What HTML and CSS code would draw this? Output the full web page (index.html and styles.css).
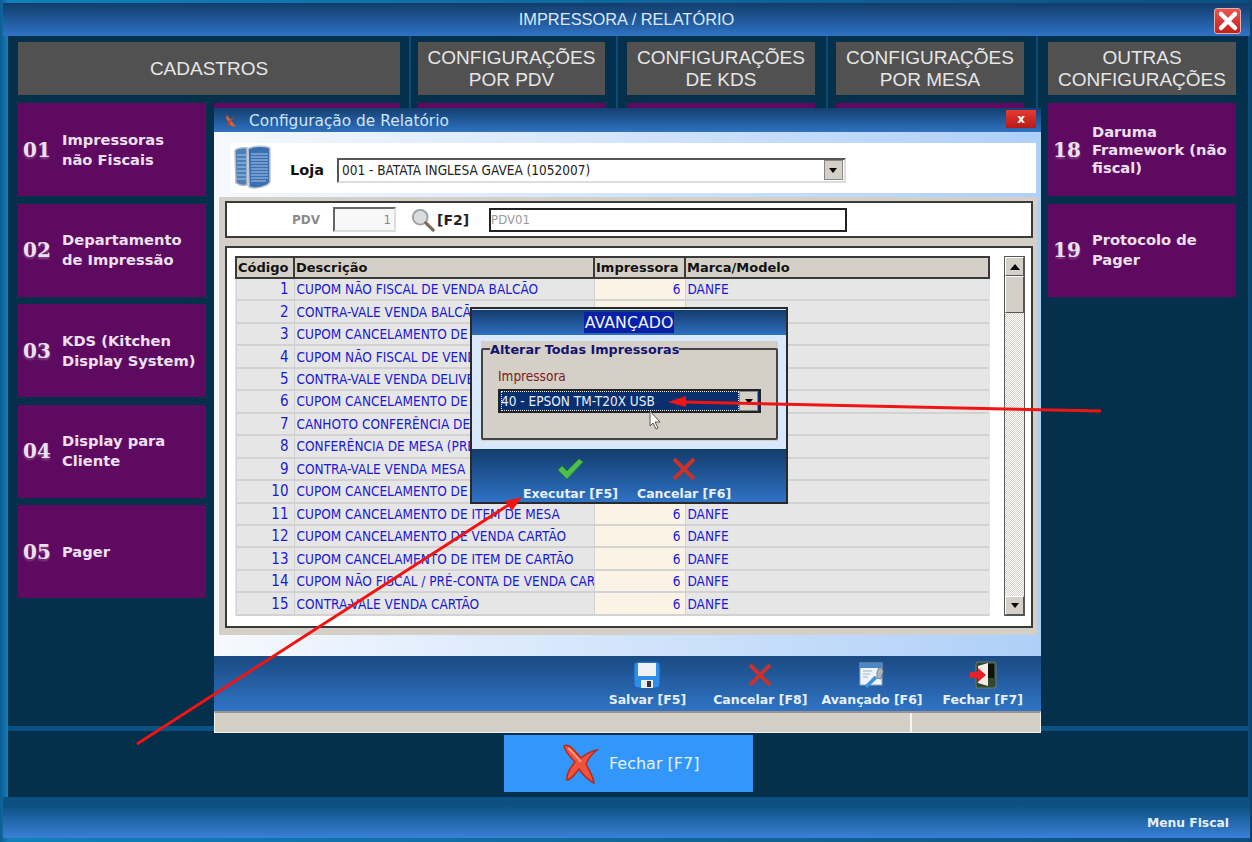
FILE: index.html
```html
<!DOCTYPE html>
<html lang="pt-BR">
<head>
    <meta charset="UTF-8">
    <meta name="viewport" content="width=device-width, initial-scale=1.0">
    <title>Impressora / Relatório</title>
    <link rel="stylesheet" href="styles.css">
</head>
<body>
    <div class="app">
        <!-- Title bar -->
        <header class="titlebar">
            <span>IMPRESSORA / RELATÓRIO</span>
            <button class="app-close">
                <svg width="22" height="22" viewBox="0 0 22 22"><path d="M4 4 L18 18 M18 4 L4 18" stroke="#fff" stroke-width="4.5" stroke-linecap="round"/></svg>
            </button>
        </header>

        <!-- Menu columns -->
        <main class="menu">
            <section class="group group-cadastros">
                <h2 class="group-title">CADASTROS</h2>
                <div class="cards-two">
                    <div class="cards">
                        <a class="card"><b>01</b><span>Impressoras<br>não Fiscais</span></a>
                        <a class="card"><b>02</b><span>Departamento<br>de Impressão</span></a>
                        <a class="card"><b>03</b><span>KDS (Kitchen<br>Display System)</span></a>
                        <a class="card"><b>04</b><span>Display para<br>Cliente</span></a>
                        <a class="card"><b>05</b><span>Pager</span></a>
                    </div>
                    <div class="cards">
                        <a class="card"></a>
                    </div>
                </div>
            </section>
            <section class="group group-pdv">
                <h2 class="group-title">CONFIGURAÇÕES<br>POR PDV</h2>
                <div class="cards"><a class="card"></a></div>
            </section>
            <section class="group group-kds">
                <h2 class="group-title">CONFIGURAÇÕES<br>DE KDS</h2>
                <div class="cards"><a class="card"></a></div>
            </section>
            <section class="group group-mesa">
                <h2 class="group-title">CONFIGURAÇÕES<br>POR MESA</h2>
                <div class="cards"><a class="card"></a></div>
            </section>
            <section class="group group-last">
                <h2 class="group-title">OUTRAS<br>CONFIGURAÇÕES</h2>
                <div class="cards">
                    <a class="card"><b>18</b><span class="tight">Daruma<br>Framework (não<br>fiscal)</span></a>
                    <a class="card"><b>19</b><span>Protocolo de<br>Pager</span></a>
                </div>
            </section>
        </main>

        <!-- Close bar -->
        <div class="closebar">
            <button class="big-close">
                <svg width="38" height="42" viewBox="0 0 38 42">
                    <path d="M3 3 C7 0 11 5 20 15 C25 11 30 8 36 7 C31 11 27 16 25 21 C28 27 32 33 33 40 C27 37 22 32 18 26 C14 31 10 37 6 37 C5 31 9 25 14 19 C9 14 4 9 3 3 Z" fill="#f0523a" stroke="#b52a20" stroke-width="1.5"/>
                    <path d="M7 5 C11 8 15 13 20 19" stroke="#ff9a80" stroke-width="2" fill="none"/>
                </svg>
                <span>Fechar [F7]</span>
            </button>
        </div>

        <footer class="statusbar">Menu Fiscal</footer>
    </div>

    <!-- Configuration window -->
    <div class="dialog">
        <div class="dialog-title">
            <svg width="14" height="14" viewBox="0 0 14 14"><path d="M3 1 L12 13 L7 12 L2 4 Z" fill="#e0602a"/><path d="M10 2 L7 8 L2 13 L5 7 Z" fill="#c8402a"/></svg>
            <span>Configuração de Relatório</span>
            <button class="dialog-close">x</button>
        </div>

        <div class="dialog-body">
            <div class="loja-panel">
                <svg class="servers" width="40" height="46" viewBox="0 0 40 46">
                    <path d="M2 6 C2 4 8 2 14 3 L14 40 C10 41 6 40 3 38 Z" fill="#4f7fb8" stroke="#b5bcc4" stroke-width="1.5"/>
                    <path d="M15 4 C18 1 32 0 37 3 L37 37 C36 41 22 45 16 42 Z" fill="#3a6fb2" stroke="#c2c8d0" stroke-width="1.5"/>
                    <path d="M18 9 H35 M18 12 H35 M18 15 H35 M18 18 H35 M18 21 H35 M18 24 H35 M18 27 H35 M18 30 H35 M18 33 H35 M18 36 H33 M4 10 H13 M4 14 H13 M4 18 H13 M4 22 H13 M4 26 H13 M4 30 H13 M4 34 H13" stroke="#a9c6e8" stroke-width="1"/>
                </svg>
                <label class="loja-label">Loja</label>
                <div class="select loja-select">
                    <span>001 - BATATA INGLESA GAVEA (1052007)</span>
                    <i class="select-btn"><em class="tri-down"></em></i>
                </div>
            </div>

            <div class="gray-area">
                <div class="pdv-panel">
                    <span class="pdv-label">PDV</span>
                    <span class="pdv-num">1</span>
                    <svg width="24" height="24" viewBox="0 0 26 26">
                        <circle cx="10" cy="10" r="8" fill="#d9dde0" stroke="#9a9fa3" stroke-width="2"/>
                        <path d="M16 16 L24 24" stroke="#7d6a55" stroke-width="3.5" stroke-linecap="round"/>
                    </svg>
                    <b class="f2">[F2]</b>
                    <span class="pdv-name">PDV01</span>
                </div>

                <div class="grid-panel">
                    <div class="grid-wrap">
                        <table class="grid">
                            <thead>
                                <tr><th class="col-code">Código</th><th class="col-desc">Descrição</th><th class="col-imp">Impressora</th><th class="col-brand">Marca/Modelo</th></tr>
                            </thead>
                            <tbody>
                                <tr><td class="code">1</td><td><div class="clip">CUPOM NÃO FISCAL DE VENDA BALCÃO</div></td><td class="imp">6</td><td>DANFE</td></tr>
                                <tr><td class="code">2</td><td><div class="clip">CONTRA-VALE VENDA BALCÃO</div></td><td class="imp"></td><td></td></tr>
                                <tr><td class="code">3</td><td><div class="clip">CUPOM CANCELAMENTO DE VENDA</div></td><td class="imp"></td><td></td></tr>
                                <tr><td class="code">4</td><td><div class="clip">CUPOM NÃO FISCAL DE VENDA</div></td><td class="imp"></td><td></td></tr>
                                <tr><td class="code">5</td><td><div class="clip">CONTRA-VALE VENDA DELIVERY</div></td><td class="imp"></td><td></td></tr>
                                <tr><td class="code">6</td><td><div class="clip">CUPOM CANCELAMENTO DE VENDA</div></td><td class="imp"></td><td></td></tr>
                                <tr><td class="code">7</td><td><div class="clip">CANHOTO CONFERÊNCIA DE MESA</div></td><td class="imp"></td><td></td></tr>
                                <tr><td class="code">8</td><td><div class="clip">CONFERÊNCIA DE MESA (PRÉ-CONTA)</div></td><td class="imp"></td><td></td></tr>
                                <tr><td class="code">9</td><td><div class="clip">CONTRA-VALE VENDA MESA</div></td><td class="imp"></td><td></td></tr>
                                <tr><td class="code">10</td><td><div class="clip">CUPOM CANCELAMENTO DE VENDA</div></td><td class="imp"></td><td></td></tr>
                                <tr><td class="code">11</td><td><div class="clip">CUPOM CANCELAMENTO DE ITEM DE MESA</div></td><td class="imp">6</td><td>DANFE</td></tr>
                                <tr><td class="code">12</td><td><div class="clip">CUPOM CANCELAMENTO DE VENDA CARTÃO</div></td><td class="imp">6</td><td>DANFE</td></tr>
                                <tr><td class="code">13</td><td><div class="clip">CUPOM CANCELAMENTO DE ITEM DE CARTÃO</div></td><td class="imp">6</td><td>DANFE</td></tr>
                                <tr><td class="code">14</td><td><div class="clip">CUPOM NÃO FISCAL / PRÉ-CONTA DE VENDA CAR</div></td><td class="imp">6</td><td>DANFE</td></tr>
                                <tr><td class="code">15</td><td><div class="clip">CONTRA-VALE VENDA CARTÃO</div></td><td class="imp">6</td><td>DANFE</td></tr>
                            </tbody>
                        </table>
                        <div class="scrollbar">
                            <i class="scroll-btn"><em class="tri-up"></em></i>
                            <i class="scroll-thumb"></i>
                            <i class="scroll-track"></i>
                            <i class="scroll-btn"><em class="tri-down"></em></i>
                        </div>
                    </div>
                </div>
            </div>
        </div>

        <div class="dialog-toolbar">
            <button class="tool tool-save">
                <svg width="28" height="28" viewBox="0 0 28 28">
                    <rect x="1" y="1" width="26" height="26" rx="4" fill="#2f8de8" stroke="#1b5fae"/>
                    <rect x="5" y="2" width="18" height="13" fill="#eef0f2"/>
                    <rect x="8" y="19" width="12" height="8" fill="#e8eaec"/>
                    <rect x="14" y="20" width="4" height="6" fill="#333"/>
                </svg>
                <span>Salvar [F5]</span>
            </button>
            <button class="tool tool-cancel">
                <svg width="28" height="28" viewBox="0 0 28 28"><path d="M4 4 L24 24 M24 4 L4 24" stroke="#c8322c" stroke-width="4"/></svg>
                <span>Cancelar [F8]</span>
            </button>
            <button class="tool tool-adv">
                <svg width="28" height="28" viewBox="0 0 28 28">
                    <rect x="2" y="2" width="22" height="22" fill="#eef3fa" stroke="#8fa8c4"/>
                    <rect x="2" y="2" width="22" height="5" fill="#4f86c6"/>
                    <path d="M5 10 H14 M5 13 H12 M5 16 H10" stroke="#9cb2cc"/>
                    <path d="M21 7 C25 7 26 11 24 13 L23 18 L19 17 L19 11 Z" fill="#aab4bb" stroke="#7c8790"/>
                    <path d="M8 26 L18 16" stroke="#3b8fdc" stroke-width="3.5"/>
                </svg>
                <span>Avançado [F6]</span>
            </button>
            <button class="tool">
                <svg width="28" height="28" viewBox="0 0 28 28">
                    <rect x="7" y="1" width="20" height="26" rx="2" fill="#2f4a2c" stroke="#777"/>
                    <rect x="19" y="3" width="6" height="14" fill="#111"/>
                    <path d="M9 5 L19 2 L19 25 L9 22 Z" fill="#f0eee6"/>
                    <path d="M1 11 H9 V7 L17 14 L9 21 V17 H1 Z" fill="#e8202a"/>
                </svg>
                <span>Fechar [F7]</span>
            </button>
        </div>

        <div class="dialog-status"><i></i><i class="status-end"></i></div>
    </div>

    <!-- Advanced modal -->
    <div class="modal">
        <div class="modal-title"><span>AVANÇADO</span></div>
        <div class="modal-body">
            <div class="modal-gray">
                <fieldset class="modal-group">
                    <legend>Alterar Todas Impressoras</legend>
                    <label>Impressora</label>
                    <div class="select modal-select">
                        <span>40 - EPSON TM-T20X USB</span>
                        <i class="select-btn"><em class="tri-down"></em></i>
                    </div>
                </fieldset>
            </div>
        </div>
        <div class="modal-toolbar">
            <button class="tool">
                <svg width="28" height="24" viewBox="0 0 28 24"><path d="M2 13 L6 9 L11 14 L23 2 L27 5 L11 22 Z" fill="#4cc04a" stroke="#2f8a35"/></svg>
                <span>Executar [F5]</span>
            </button>
            <button class="tool">
                <svg width="28" height="24" viewBox="0 0 28 24"><path d="M4 2 L24 22 M24 2 L4 22" stroke="#c8322c" stroke-width="4"/></svg>
                <span>Cancelar [F6]</span>
            </button>
        </div>
    </div>

    <!-- Annotations drawn over the screenshot -->
    <svg class="annotations" width="1252" height="842" viewBox="0 0 1252 842">
        <path d="M1101 411 L682 402" stroke="#f01414" stroke-width="3"/>
        <path d="M668 402 L686 396 L686 407 Z" fill="#f01414"/>
        <path d="M137 744 L510 504" stroke="#f01414" stroke-width="3"/>
        <path d="M522 497 L512 511 L505 501 Z" fill="#f01414"/>
        <path d="M650 411 V426 L653 423 L656 429 L658 428 L655 422 L660 422 Z" fill="#fff" stroke="#555" stroke-width="1"/>
    </svg>
</body>
</html>
```

FILE: styles.css
```css
* {
    box-sizing: border-box;
}
html, body {
    margin: 0;
    padding: 0;
}
body {
    width: 1252px;
    height: 842px;
    overflow: hidden;
    position: relative;
    font-family: "Liberation Sans", Arial, sans-serif;
    background: linear-gradient(90deg, #0d5c92 0, #1180b8 8px, #0d4f82 1248px, #0d3f68 100%);
}
button {
    font-family: inherit;
    border: none;
    background: none;
    padding: 0;
}
.app {
    height: 842px;
    padding-top: 3px;
    display: flex;
    flex-direction: column;
}
/* Title bar */
.titlebar {
    height: 33px;
    margin: 0 2px 0 3px;
    flex: none;
    display: flex;
    align-items: center;
    justify-content: center;
    position: relative;
    color: #dce8f5;
    font-size: 16.4px;
    background: linear-gradient(#113d6b, #2f72c4);
}
.app-close {
    position: absolute;
    top: 5px;
    right: 9px;
    width: 27px;
    height: 26px;
    border-radius: 3px;
    background: linear-gradient(#e8554f, #c31f1c);
    border: 1px solid #e6b0ac;
    display: flex;
    align-items: center;
    justify-content: center;
}
/* Menu */
.menu {
    flex: 1;
    min-height: 0;
    margin: 0 4px 0 8px;
    display: flex;
    background: #04304b;
    border-bottom: 5px solid #0b5284;
}
.group {
    padding-top: 6px;
    border-right: 2px solid #0c4a78;
}
.group-cadastros {
    width: 403px;
    padding-left: 10px;
    padding-right: 9px;
}
.group-pdv {
    width: 207px;
    padding-left: 7px;
    padding-right: 11px;
}
.group-kds {
    width: 210px;
    padding-left: 9px;
    padding-right: 11px;
}
.group-mesa {
    width: 210px;
    padding-left: 8px;
    padding-right: 12px;
}
.group-last {
    width: 210px;
    padding-left: 10px;
    padding-right: 12px;
    border-right: none;
}
.group-title {
    margin: 0;
    height: 53px;
    display: flex;
    align-items: center;
    justify-content: center;
    text-align: center;
    background: #515151;
    color: #e6e6e6;
    font-size: 19px;
    line-height: 22px;
    font-weight: normal;
}
.cards-two {
    display: flex;
    gap: 8px;
}
.cards-two .cards {
    width: 188px;
}
.cards-two .cards + .cards {
    width: 186px;
}
.cards {
    margin-top: 8px;
    display: flex;
    flex-direction: column;
    gap: 7.5px;
}
.card {
    height: 93px;
    display: flex;
    align-items: center;
    gap: 13px;
    padding-left: 5px;
    background: #5e0a60;
    color: #ece0ee;
    font-family: "DejaVu Sans", Verdana, sans-serif;
    font-size: 14.7px;
    font-weight: bold;
    line-height: 20px;
}
.card b {
    width: 26px;
    font-family: "DejaVu Serif", Georgia, serif;
    font-size: 20px;
    text-shadow: 0 2px 2px rgba(255, 255, 255, 0.25);
}
.card .tight {
    line-height: 18px;
}
/* Close bar */
.closebar {
    height: 66px;
    flex: none;
    margin: 0 4px 0 8px;
    padding-top: 4px;
    padding-left: 496px;
    background: #04304b;
}
.big-close {
    width: 249px;
    height: 57px;
    background: #3296fa;
    color: #e6f2ff;
    font-family: "DejaVu Sans", Verdana, sans-serif;
    font-size: 16px;
    display: flex;
    align-items: center;
    gap: 10px;
    padding-left: 57px;
}
.statusbar {
    height: 41px;
    flex: none;
    margin: 0 2px 4px 3px;
    background: linear-gradient(#0c5080 20%, #3a80d8);
    color: #e6eef8;
    font-family: "DejaVu Sans", Verdana, sans-serif;
    font-size: 12.3px;
    font-weight: bold;
    display: flex;
    align-items: center;
    justify-content: flex-end;
    padding: 10px 21px 0 0;
}
/* Configuration window */
.dialog {
    position: absolute;
    left: 214px;
    top: 108px;
    width: 827px;
    height: 625px;
    display: flex;
    flex-direction: column;
}
.dialog-title {
    height: 24px;
    flex: none;
    display: flex;
    align-items: center;
    gap: 11px;
    padding: 2px 0 0 10px;
    position: relative;
    color: #cfe4fb;
    font-family: "DejaVu Sans", Verdana, sans-serif;
    font-size: 15.4px;
    background: linear-gradient(#143f70, #2f72c0);
}
.dialog-close {
    position: absolute;
    right: 5px;
    top: 2px;
    width: 30px;
    height: 18px;
    background: linear-gradient(#e53a34, #b81a18);
    color: #fff;
    font-size: 12px;
    font-weight: bold;
    line-height: 14px;
}
.dialog-body {
    height: 524px;
    flex: none;
    padding: 11px 4px 0;
    background: linear-gradient(90deg, #f6f9fe, #aecff8);
}
.loja-panel {
    margin: 0 1px 0 12px;
    height: 50px;
    background: #fff;
    display: flex;
    align-items: center;
    padding-left: 3px;
}
.loja-label {
    margin: 4px 13px 0 17px;
    font-family: "DejaVu Sans", Verdana, sans-serif;
    font-size: 14.5px;
    font-weight: bold;
    color: #111;
}
.select {
    display: flex;
    align-items: center;
    justify-content: space-between;
    font-family: "DejaVu Sans Condensed", "Liberation Sans", sans-serif;
    font-size: 13.5px;
}
.loja-select {
    width: 509px;
    height: 25px;
    margin-top: 4px;
    padding: 0 1px 0 3px;
    background: #fff;
    border: 2px solid;
    border-color: #555 #ddd #ddd #555;
    color: #222;
}
.select-btn {
    width: 19px;
    height: 20px;
    background: #d4d0c8;
    border: 1px solid #888;
    display: flex;
    align-items: center;
    justify-content: center;
}
.tri-down {
    border-style: solid;
    border-width: 5px 4px 0;
    border-color: #000 transparent transparent;
}
.tri-up {
    border-style: solid;
    border-width: 0 5px 6px;
    border-color: transparent transparent #000;
}
.gray-area {
    height: 438px;
    margin: 4px 0 0 1px;
    padding: 4px 4px 0 6px;
    background: #d4d0c8;
}
.pdv-panel {
    height: 37px;
    background: #fff;
    border: 2px solid #3a3a3a;
    display: flex;
    align-items: center;
    font-size: 13px;
}
.pdv-label {
    margin-left: 65px;
    width: 41px;
    color: #8a8a8a;
    font-family: "DejaVu Sans", sans-serif;
    font-size: 12px;
    font-weight: bold;
}
.pdv-num {
    width: 63px;
    height: 25px;
    border: 2px solid;
    border-color: #666 #ddd #ddd #666;
    background: #f8f8f8;
    color: #888;
    text-align: right;
    padding: 3px 3px 0 0;
    font-family: "DejaVu Sans Condensed", sans-serif;
}
.pdv-panel svg {
    margin-left: 15px;
}
.f2 {
    margin: 0 20px 0 2px;
    font-family: "DejaVu Sans", sans-serif;
    font-size: 14px;
    color: #222;
}
.pdv-name {
    width: 358px;
    height: 24px;
    border: 2px solid #222;
    padding: 2px 0 0 0;
    color: #999;
    font-family: "DejaVu Sans Condensed", sans-serif;
}
.grid-panel {
    margin-top: 8px;
    height: 382px;
    background: #fff;
    border: 2px solid #3a3a3a;
    padding: 8px 6px 10px 8px;
}
.grid-wrap {
    display: flex;
    justify-content: space-between;
    height: 100%;
    position: relative;
}
.grid {
    width: 755px;
    height: 360px;
    table-layout: fixed;
    border-collapse: collapse;
    font-family: "DejaVu Sans Condensed", "Liberation Sans", sans-serif;
    font-size: 13.5px;
    color: #1a1ad0;
    background: #e6e6e6;
}
.grid th {
    height: 21px;
    padding: 0 0 0 1px;
    text-align: left;
    background: #d4d0c8;
    border: 2px solid #3a3a3a;
    color: #111;
    font-family: "DejaVu Sans", sans-serif;
    font-size: 13px;
}
.col-code { width: 58px; }
.col-desc { width: 300px; }
.col-imp { width: 91px; }
.grid td {
    height: 22.4px;
    padding: 0 0 0 2px;
    border-bottom: 2px solid #d2d2d2;
    border-left: 1px solid #d2d2d2;
}
.grid td.code {
    text-align: right;
    padding-right: 5px;
    font-size: 15px;
}
.grid td.imp {
    text-align: right;
    padding-right: 4px;
    background: #fbf4e6;
}
.clip {
    width: 297px;
    overflow: hidden;
    white-space: nowrap;
}
.scrollbar {
    width: 21px;
    display: flex;
    flex-direction: column;
    background: #d4d0c8;
    border: 1px solid #555;
}
.scroll-btn {
    height: 19px;
    flex: none;
    display: flex;
    align-items: center;
    justify-content: center;
    background: #d4d0c8;
    border: 1px solid #fff;
    border-color: #fff #555 #555 #fff;
}
.scroll-thumb {
    height: 37px;
    flex: none;
    background: #d4d0c8;
    border: 1px solid;
    border-color: #fff #555 #555 #fff;
}
.scroll-track {
    flex: 1;
    background: repeating-conic-gradient(#d4d0c8 0 25%, #ffffff 0 50%) 0 0 / 2px 2px;
}
.dialog-toolbar {
    height: 55px;
    flex: none;
    display: flex;
    justify-content: flex-end;
    padding-right: 18px;
    background: linear-gradient(#1a4a82, #3074c6);
}
.tool {
    display: flex;
    flex-direction: column;
    align-items: center;
    color: #e6f0fb;
    font-family: "DejaVu Sans", Verdana, sans-serif;
    font-size: 12.5px;
    font-weight: bold;
    padding: 5px 0 0;
    white-space: nowrap;
}
.tool span {
    margin-top: 3px;
}
.tool-save {
    margin-right: 27px;
}
.tool-cancel {
    margin-right: 14px;
}
.tool-adv {
    margin-right: 20px;
}
.dialog-status {
    height: 22px;
    flex: none;
    display: flex;
    background: #d4d0c8;
    border-top: 2px solid #98948c;
    border-bottom: 1px solid #f0f0f0;
    border-left: 1px solid #f0f0f0;
    border-right: 1px solid #f0f0f0;
}
.dialog-status i {
    width: 697px;
    border-right: 2px solid #f4f4f4;
}
.dialog-status .status-end {
    flex: 1;
    border-right: none;
}
/* Advanced modal */
.modal {
    position: absolute;
    left: 470px;
    top: 307px;
    width: 318px;
    height: 197px;
    background: #d9e8fb;
    border: 2px solid #2a2a2a;
    display: flex;
    flex-direction: column;
}
.modal-title {
    height: 25px;
    margin-top: 1px;
    flex: none;
    text-align: center;
    color: #eef4fc;
    font-family: "DejaVu Sans", Verdana, sans-serif;
    font-size: 15.8px;
    line-height: 20px;
    padding-top: 3px;
    background: linear-gradient(#133c6c, #2f6fc0);
}
.modal-title span {
    background: #0a1fa8;
    padding: 1px;
}
.modal-body {
    flex: 1;
    padding: 6px 8px 8px 9px;
}
.modal-gray {
    height: 100px;
    background: #d4d0c8;
}
.modal-group {
    margin: 0;
    height: 99px;
    padding: 11px 15px 0 15px;
    border: 2px solid #444;
    border-radius: 2px;
}
.modal-group legend {
    padding: 1px 0 0;
    margin-left: -8px;
    color: #14146e;
    font-family: "DejaVu Sans", Verdana, sans-serif;
    font-size: 12.8px;
    font-weight: bold;
}
.modal-group label {
    display: block;
    color: #7a1a1a;
    font-family: "DejaVu Sans Condensed", sans-serif;
    font-size: 13.5px;
    margin-bottom: 5px;
}
.modal-select {
    width: 263px;
    height: 24px;
    background: #0a2f6e;
    color: #e6eef8;
    border: 2px solid #222;
    padding: 0 1px;
}
.modal-select span {
    flex: 1;
    height: 100%;
    line-height: 20px;
    outline: 1px dotted #e8e8e8;
    outline-offset: -1px;
}
.modal-toolbar {
    height: 53px;
    flex: none;
    display: flex;
    gap: 19px;
    padding: 3px 0 0 51px;
    background: linear-gradient(#123c6c, #2f72c4);
}
.modal-toolbar .tool span {
    margin-top: 5px;
}
.annotations {
    position: absolute;
    left: 0;
    top: 0;
    pointer-events: none;
}
```
